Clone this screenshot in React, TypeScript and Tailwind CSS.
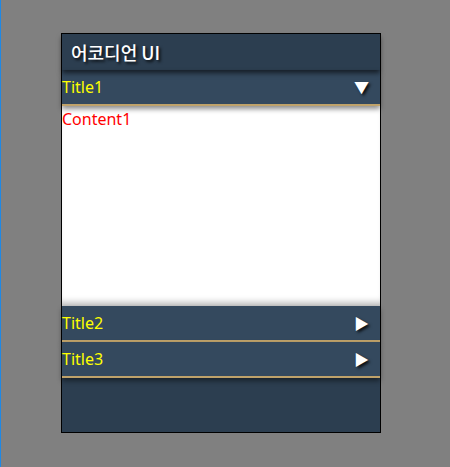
import { useState } from 'react'

const items = [
  { id: 1, title: 'Title1', content: 'Content1' },
  { id: 2, title: 'Title2', content: 'Content2' },
  { id: 3, title: 'Title3', content: 'Content3' },
]

export default function App() {
  const [open, setOpen] = useState<number | null>(1)

  return (
    <div className="w-[450px] h-[467px] bg-[#808080] border-l border-[#1e88e5] pt-[33px] pl-[60px] font-['Noto_Sans','Noto_Sans_CJK_KR',sans-serif]">
      <div className="w-[320px] h-[400px] border border-black bg-[#2c3e50] flex flex-col">
        {/* Header */}
        <div className="relative z-20 h-[36px] flex items-center px-[9px] text-white text-[18px] font-medium [text-shadow:2px_2px_3px_rgba(0,0,0,0.8)] shadow-[0_3px_5px_rgba(0,0,0,0.6)] font-['Noto_Sans_CJK_KR',sans-serif]">
          어코디언 UI
        </div>

        {items.map(item => (
          <div key={item.id}>
            <button
              onClick={() => setOpen(open === item.id ? null : item.id)}
              className="relative z-10 w-full h-[36px] flex items-center justify-between bg-[#34495e] border-b-2 border-[#bfa26a] pr-[11px] text-[#ffff00] text-[16px] shadow-[0_3px_5px_rgba(0,0,0,0.45)]"
            >
              <span>{item.title}</span>
              <span className="text-white text-[15px] [text-shadow:2px_2px_3px_rgba(0,0,0,0.8)]">
                {open === item.id ? '▼' : '▶'}
              </span>
            </button>
            {open === item.id && (
              <div className="h-[200px] bg-white text-[#ff0000] text-[16px] leading-[22px] pt-[2px] shadow-[inset_0_-8px_6px_-4px_rgba(0,0,0,0.25)]">
                {item.content}
              </div>
            )}
          </div>
        ))}
      </div>
    </div>
  )
}
